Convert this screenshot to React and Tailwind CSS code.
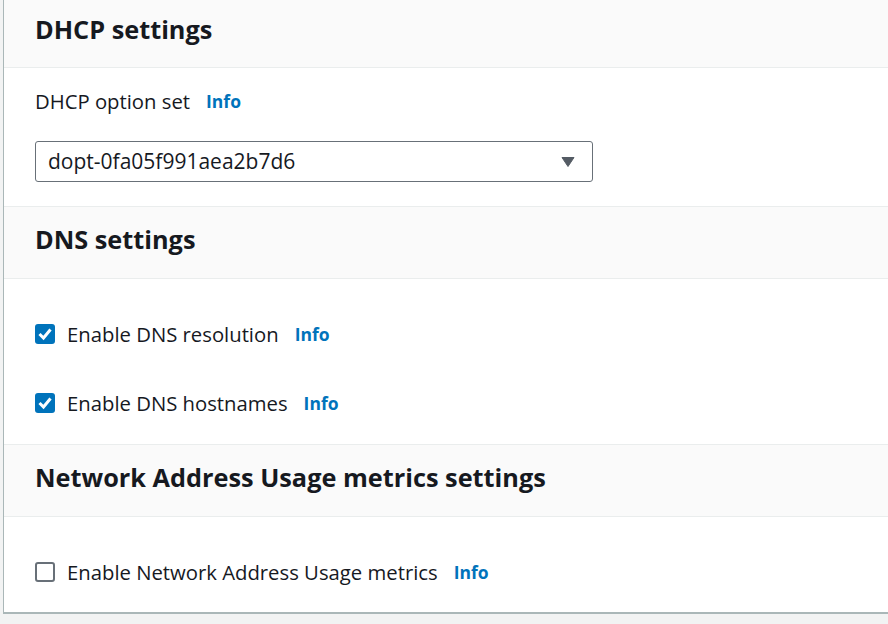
import React from "react";

const font = { fontFamily: '"Open Sans", "Noto Sans", sans-serif' };

const Info = () => <a className="ml-[16px] text-[17.5px] font-bold text-[#0073bb]">Info</a>;

const Header = ({ title }) => (
    <div className="flex h-[73px] items-center border-y border-[#eaeded] bg-[#fafafa] px-[31px] pb-[5px]">
        <h2 className="text-[25.3px] font-bold text-[#16191f]">{title}</h2>
    </div>
);

const Check = ({ label, checked }) => (
    <div className="flex h-[24px] items-center">
        {checked ? (
            <span className="flex h-[20px] w-[20px] items-center justify-center rounded-[3px] bg-[#0073bb]">
                <svg width="20" height="20" viewBox="0 0 20 20">
                    <path d="M4.5 10 L8.5 14 L15.5 5.5" fill="none" stroke="#fff" strokeWidth="3" />
                </svg>
            </span>
        ) : (
            <span className="h-[20px] w-[20px] rounded-[3px] border-2 border-[#687078] bg-white" />
        )}
        <span className="ml-[12px] text-[20.3px] text-[#16191f]">{label}</span>
        <Info />
    </div>
);

export default function App() {
    return (
        <div style={font} className="h-[624px] w-[888px] overflow-hidden bg-[#f2f3f3] pl-[3px]">
            <div className="h-[614px] border-b-2 border-l border-[#aab7b8] bg-white">
                <div className="flex h-[68px] items-center border-b border-[#eaeded] bg-[#fafafa] px-[31px] pb-[8px]">
                    <h2 className="text-[25.3px] font-bold text-[#16191f]">DHCP settings</h2>
                </div>
                <div className="px-[31px] pt-[19px] pb-[24px]">
                    <div className="flex h-[28px] items-center text-[20.3px] text-[#16191f]">
                        DHCP option set <Info />
                    </div>
                    <div className="mt-[26px] flex h-[41px] w-[558px] items-center justify-between rounded-[3px] border border-[#687078] pl-[12px] pr-[17px]">
                        <span className="text-[21px] text-[#16191f]">dopt-0fa05f991aea2b7d6</span>
                        <svg width="14" height="10" viewBox="0 0 14 10">
                            <path d="M1 0.5 H13 L7 9.5 Z" fill="#545b64" stroke="#545b64" strokeLinejoin="round" />
                        </svg>
                    </div>
                </div>
                <Header title="DNS settings" />
                <div className="flex flex-col gap-[45px] px-[31px] pt-[43px] pb-[29px]">
                    <Check label="Enable DNS resolution" checked />
                    <Check label="Enable DNS hostnames" checked />
                </div>
                <Header title="Network Address Usage metrics settings" />
                <div className="px-[31px] pt-[43px]">
                    <Check label="Enable Network Address Usage metrics" />
                </div>
            </div>
        </div>
    );
}
